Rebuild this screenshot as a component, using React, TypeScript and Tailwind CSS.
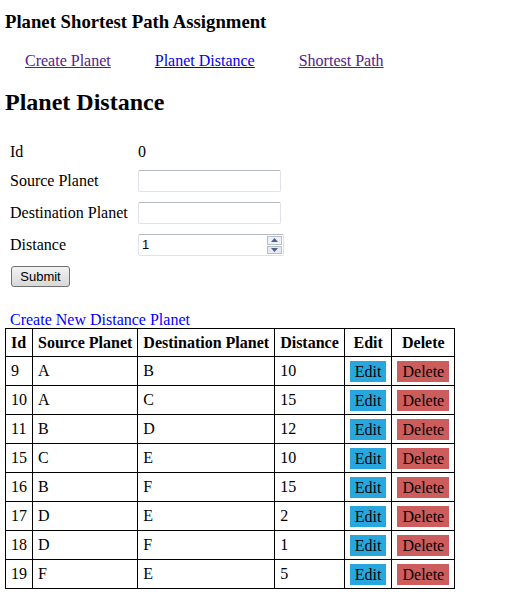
import React from 'react';

const NAV = [
  { label: 'Create Planet', visited: true },
  { label: 'Planet Distance', visited: false },
  { label: 'Shortest Path', visited: true },
];

const ROWS = [
  { id: 9, source: 'A', dest: 'B', distance: 10 },
  { id: 10, source: 'A', dest: 'C', distance: 15 },
  { id: 11, source: 'B', dest: 'D', distance: 12 },
  { id: 15, source: 'C', dest: 'E', distance: 10 },
  { id: 16, source: 'B', dest: 'F', distance: 15 },
  { id: 17, source: 'D', dest: 'E', distance: 2 },
  { id: 18, source: 'D', dest: 'F', distance: 1 },
  { id: 19, source: 'F', dest: 'E', distance: 5 },
];

function TextBox({ wide, value }: { wide?: boolean; value?: string }) {
  return (
    <div
      className={`flex h-[22px] items-center rounded-[2px] border border-[#dfe3e9] border-t-[#b5b9c1] bg-white ${
        wide ? 'w-[146px]' : 'w-[143px]'
      }`}
    >
      <span className="flex-1 pl-[3px] font-['Liberation_Sans',sans-serif] text-[13px] text-black">{value}</span>
      {wide && (
        <div className="mr-[1px] flex h-[18px] w-[15px] flex-col gap-[1px]">
          <div className="flex flex-1 items-center justify-center border border-[#b8bfc9] bg-[#eef1f5]">
            <svg width="7" height="4" viewBox="0 0 7 4">
              <path d="M3.5 0 L7 4 L0 4 Z" fill="#4d6185" />
            </svg>
          </div>
          <div className="flex flex-1 items-center justify-center border border-[#b8bfc9] bg-[#e6eaf0]">
            <svg width="7" height="4" viewBox="0 0 7 4">
              <path d="M0 0 L7 0 L3.5 4 Z" fill="#4d6185" />
            </svg>
          </div>
        </div>
      )}
    </div>
  );
}

export default function App() {
  return (
    <div className="min-h-[601px] bg-white px-[5px] font-['Liberation_Serif',serif] text-[16px] text-black">
      <h3 className="pt-[11px] text-[18.72px] font-bold leading-[22px]">Planet Shortest Path Assignment</h3>

      {/* nav */}
      <div className="mt-[19px] flex gap-[44px] pl-[20px] leading-[18px]">
        {NAV.map((n) => (
          <a
            key={n.label}
            href="#"
            className={`underline ${n.visited ? 'text-[#551a8b]' : 'text-[#0000ee]'}`}
          >
            {n.label}
          </a>
        ))}
      </div>

      <h2 className="mt-[18px] text-[24px] font-bold leading-[28px]">Planet Distance</h2>

      {/* form */}
      <div className="mt-[23px] pl-[5px]">
        <div className="flex h-[26px] items-center">
          <span className="w-[128px]">Id</span>
          <span>0</span>
        </div>
        <div className="flex h-[32px] items-center">
          <span className="w-[128px]">Source Planet</span>
          <TextBox />
        </div>
        <div className="flex h-[32px] items-center">
          <span className="w-[128px]">Destination Planet</span>
          <TextBox />
        </div>
        <div className="flex h-[32px] items-center">
          <span className="w-[128px]">Distance</span>
          <TextBox wide value="1" />
        </div>
        <button className="mt-[5px] ml-[1px] h-[21px] w-[59px] rounded-[3px] border border-[#707070] bg-gradient-to-b from-[#f2f2f2] to-[#d8d8d8] font-['Liberation_Sans',sans-serif] text-[13px] leading-[19px] text-black">
          Submit
        </button>
      </div>

      <a href="#" className="mt-[23px] ml-[5px] block leading-[17px] text-[#0000ff]">
        Create New Distance Planet
      </a>

      {/* table */}
      <table className="border-collapse">
        <thead>
          <tr className="h-[28px]">
            <th className="border border-black px-[5px] text-left">Id</th>
            <th className="border border-black px-[5px] text-left">Source Planet</th>
            <th className="border border-black px-[5px] text-left">Destination Planet</th>
            <th className="border border-black px-[5px] text-left">Distance</th>
            <th className="border border-black px-[5px] text-center">Edit</th>
            <th className="border border-black px-[5px] text-center">Delete</th>
          </tr>
        </thead>
        <tbody>
          {ROWS.map((r) => (
            <tr key={r.id} className="h-[29px]">
              <td className="border border-black px-[5px]">{r.id}</td>
              <td className="border border-black px-[5px]">{r.source}</td>
              <td className="border border-black px-[5px]">{r.dest}</td>
              <td className="border border-black px-[5px]">{r.distance}</td>
              <td className="border border-black px-[5px] pt-[2px]">
                <span className="inline-block h-[21px] bg-[#28a7df] px-[5px] leading-[21px]">Edit</span>
              </td>
              <td className="border border-black px-[5px] pt-[2px]">
                <span className="inline-block h-[21px] bg-[#cd5c5c] px-[5px] leading-[21px]">Delete</span>
              </td>
            </tr>
          ))}
        </tbody>
      </table>
    </div>
  );
}
